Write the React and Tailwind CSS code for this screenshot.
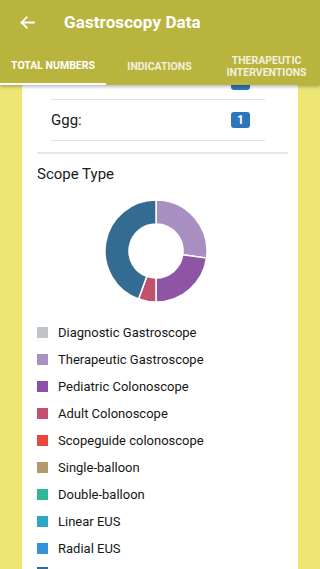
import React from "react";

const segs = [
  { v: 98, c: "#a78fc2" },
  { v: 82, c: "#8e55a6" },
  { v: 20, c: "#c4506f" },
  { v: 160, c: "#336b92" },
];

function arc(a0, a1, R, r, cx, cy) {
  const rad = (a) => (a * Math.PI) / 180;
  const p = (a, rr) => [cx + rr * Math.sin(rad(a)), cy - rr * Math.cos(rad(a))];
  const [x0, y0] = p(a0, R);
  const [x1, y1] = p(a1, R);
  const [x2, y2] = p(a1, r);
  const [x3, y3] = p(a0, r);
  const large = a1 - a0 > 180 ? 1 : 0;
  return `M${x0} ${y0} A${R} ${R} 0 ${large} 1 ${x1} ${y1} L${x2} ${y2} A${r} ${r} 0 ${large} 0 ${x3} ${y3} Z`;
}

function Donut() {
  let a = 0;
  return (
    <svg width="110" height="110" viewBox="0 0 110 110">
      {segs.map((s, i) => {
        const d = arc(a, a + s.v, 51, 27, 55, 55);
        a += s.v;
        return <path key={i} d={d} fill={s.c} stroke="#ffffff" strokeWidth="1.5" />;
      })}
    </svg>
  );
}

const legend = [
  ["Diagnostic Gastroscope", "bg-[#bfc4c9]"],
  ["Therapeutic Gastroscope", "bg-[#a890c3]"],
  ["Pediatric Colonoscope", "bg-[#8e4fa8]"],
  ["Adult Colonoscope", "bg-[#c5506f]"],
  ["Scopeguide colonoscope", "bg-[#e8483c]"],
  ["Single-balloon", "bg-[#b39a6c]"],
  ["Double-balloon", "bg-[#2fb797]"],
  ["Linear EUS", "bg-[#2ea6c2]"],
  ["Radial EUS", "bg-[#3592db]"],
];

export default function App() {
  return (
    <div
      className="w-[320px] h-[569px] overflow-hidden flex flex-col bg-[#ede674]"
      style={{ fontFamily: "Roboto, 'Noto Sans', sans-serif" }}
    >
      <div className="relative z-10 bg-[#b8b43e] shadow-[0_2px_3px_rgba(0,0,0,0.25)]">
        <div className="h-[45px] flex items-center">
          <svg className="ml-[19px]" width="17" height="17" viewBox="0 0 24 24" fill="none" stroke="#fff" strokeWidth="2.6" strokeLinecap="square">
            <path d="M21 12H4M11 4.5L3.5 12L11 19.5" />
          </svg>
          <span className="ml-[28px] text-white text-[17px] font-bold tracking-[0.1px]">Gastroscopy Data</span>
        </div>
        <div className="h-[40px] flex">
          <div className="w-[106px] flex flex-col">
            <div className="flex-1 flex items-center justify-center text-white text-[10.5px] font-bold pt-[3px]">TOTAL NUMBERS</div>
            <div className="h-[2px] bg-white"></div>
          </div>
          <div className="w-[107px] flex items-center justify-center text-white/80 text-[10.5px] font-bold pt-[3px]">INDICATIONS</div>
          <div className="w-[107px] flex items-center justify-center text-center text-white/80 text-[10.5px] font-bold leading-[12px] pt-[4px]">
            THERAPEUTIC<br />INTERVENTIONS
          </div>
        </div>
      </div>
      <div className="flex-1 overflow-hidden px-[22px]">
        <div className="bg-white h-full overflow-hidden">
          <div className="-mt-[20px] pl-[15px] pr-[10px]">
            <div className="ml-[14px] mr-[23px]">
              <div className="h-[35px] flex items-center justify-end border-b border-[#e2e2e2]">
                <span className="mr-[15px] bg-[#2e75bc] text-white text-[12px] font-bold rounded-[3px] w-[19px] h-[16px] flex items-center justify-center"></span>
              </div>
              <div className="h-[41px] flex items-center justify-between border-b border-[#e2e2e2]">
                <span className="text-[15px] text-[#1a1a1a]">Ggg:</span>
                <span className="mr-[15px] bg-[#2e75bc] text-white text-[12px] font-bold rounded-[3px] w-[19px] h-[16px] flex items-center justify-center">1</span>
              </div>
            </div>
            <div className="mt-[11px] h-[2px] bg-[#e6e6e6]"></div>
            <div className="mt-[11px] text-[15px] text-[#1a1a1a] leading-[18px]">Scope Type</div>
            <div className="mt-[13px] flex justify-center pr-[14px]">
              <Donut />
            </div>
            <div className="mt-[13px] flex flex-col">
              {legend.map(([t, c]) => (
                <div key={t} className="h-[27px] flex items-center">
                  <div className={`w-[11px] h-[11px] ${c}`}></div>
                  <span className="ml-[10px] text-[13px] text-[#161616]">{t}</span>
                </div>
              ))}
              <div className="h-[27px] flex items-start pt-[5px]">
                <div className="w-[11px] h-[11px] bg-[#346c8f]"></div>
              </div>
            </div>
          </div>
        </div>
      </div>
    </div>
  );
}
